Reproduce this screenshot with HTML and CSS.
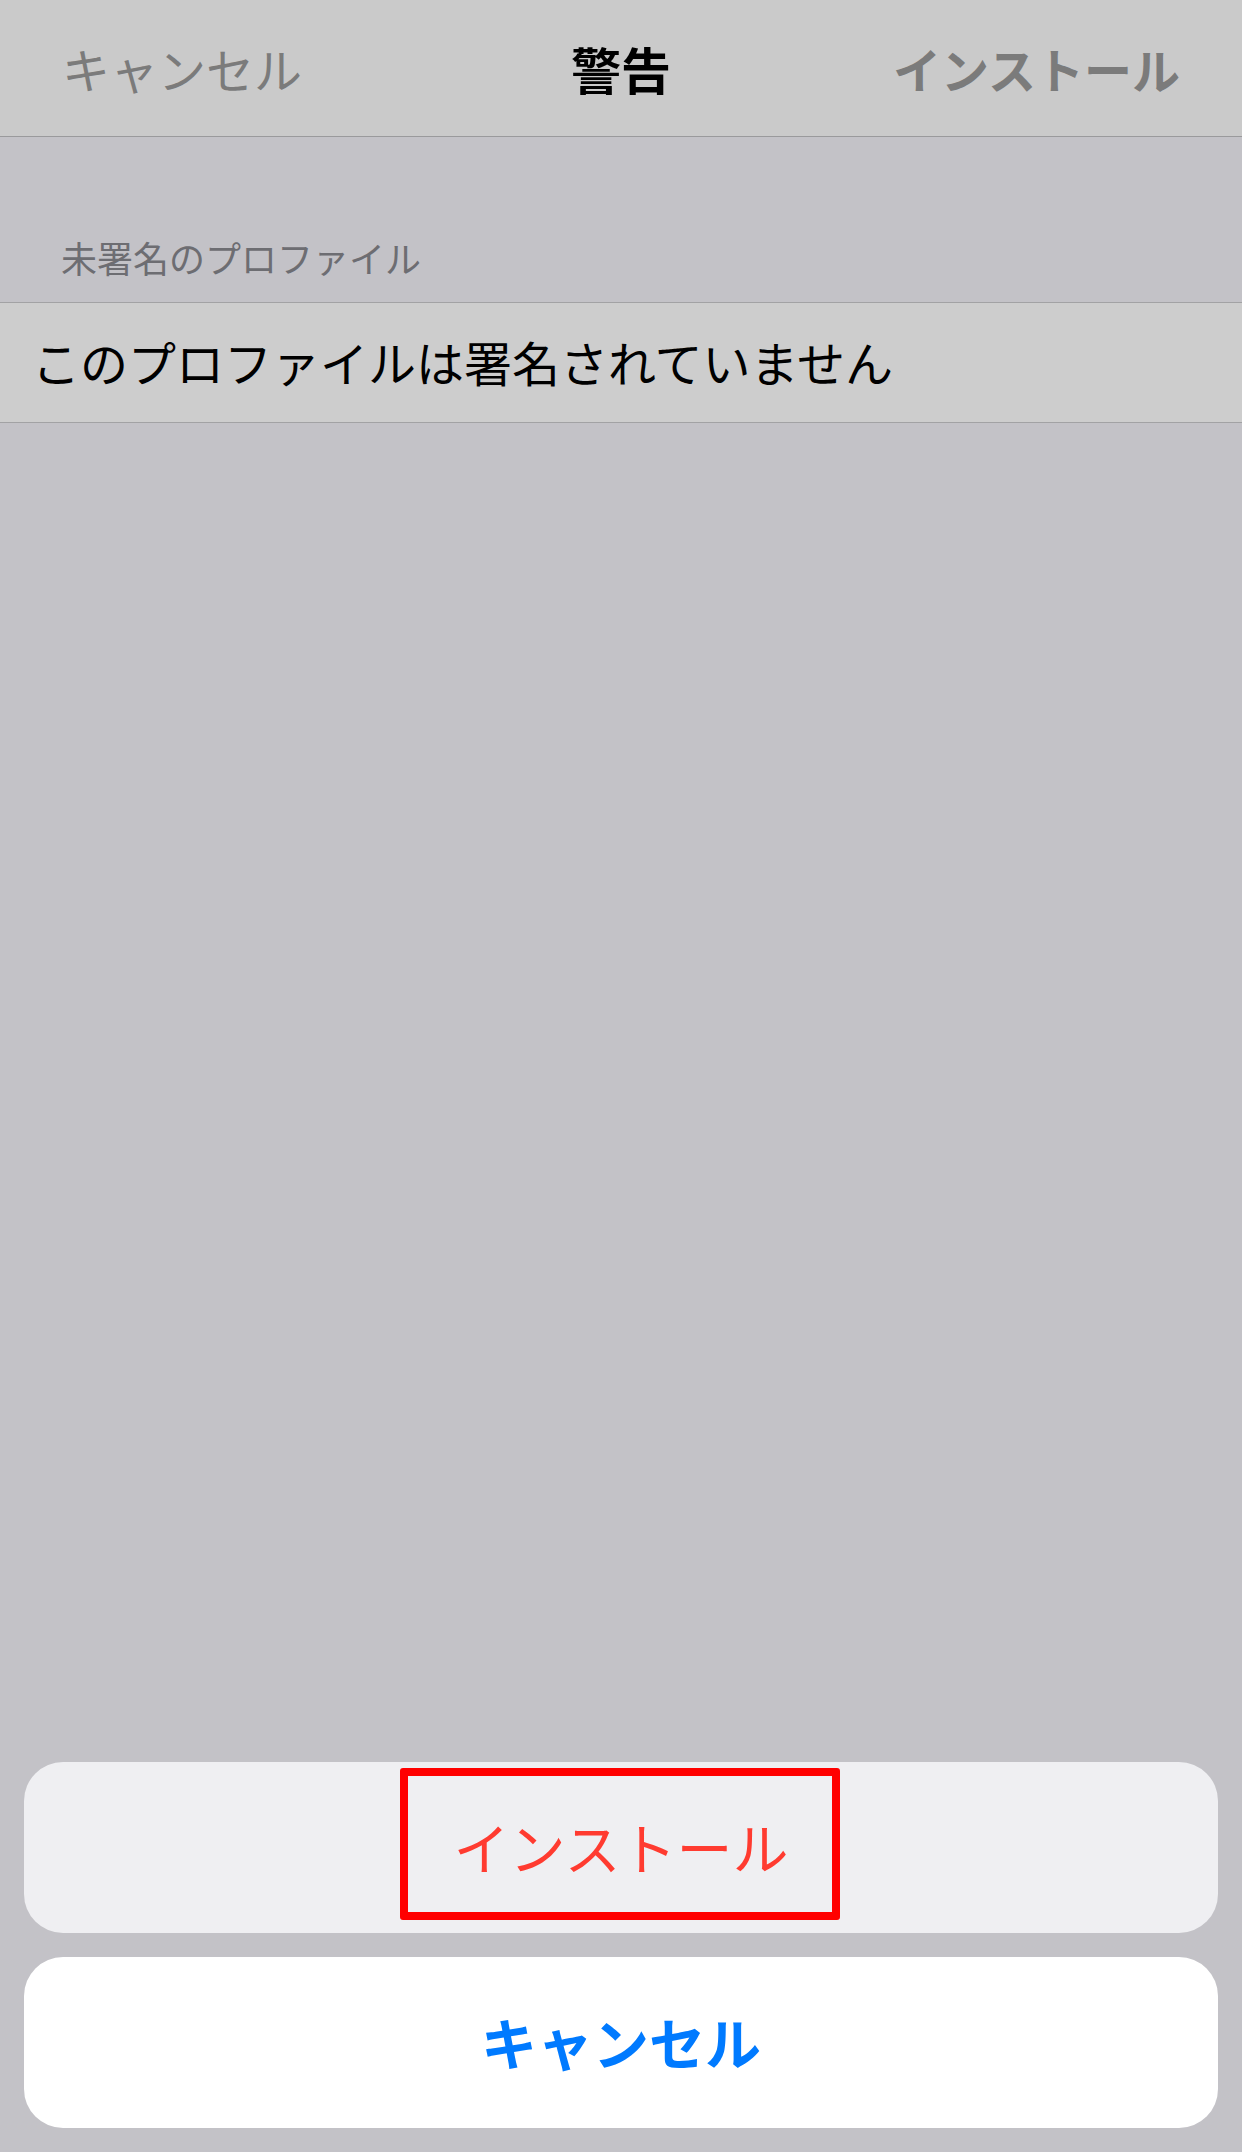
FILE: index.html
```html
<!DOCTYPE html>
<html lang="ja">
<head>
<meta charset="utf-8">
<title>警告</title>
<link rel="stylesheet" href="styles.css">
</head>
<body>
<div class="screen">
  <header class="navbar">
    <span class="nav-left">キャンセル</span>
    <span class="nav-title">警告</span>
    <span class="nav-right">インストール</span>
  </header>
  <div class="section-header">未署名のプロファイル</div>
  <div class="row">このプロファイルは署名されていません</div>
  <div class="spacer"></div>
  <div class="sheet">
    <div class="sheet-btn install">
      <span>インストール</span>
      <div class="highlight"></div>
    </div>
    <div class="sheet-btn cancel">キャンセル</div>
  </div>
</div>
</body>
</html>
```

FILE: styles.css
```css
html, body {
  margin: 0;
  padding: 0;
}
body {
  width: 1242px;
  height: 2152px;
  background: #c3c2c7;
  font-family: "Noto Sans CJK JP", "Noto Sans", sans-serif;
  overflow: hidden;
}
.screen {
  display: flex;
  flex-direction: column;
  height: 2152px;
}
.navbar {
  height: 136px;
  background: #cacaca;
  border-bottom: 1px solid #9a9a9c;
  display: grid;
  grid-template-columns: 1fr auto 1fr;
  align-items: center;
  padding: 0 62px 0 62px;
  font-size: 48px;
  line-height: 1;
}
.nav-left {
  justify-self: start;
  color: #7b7b7b;
  font-weight: 400;
}
.nav-title {
  justify-self: center;
  color: #000;
  font-weight: 700;
  font-size: 50px;
}
.nav-right {
  justify-self: end;
  color: #7b7b7b;
  font-weight: 700;
}
.section-header {
  height: 165px;
  box-sizing: border-box;
  display: flex;
  align-items: flex-end;
  padding: 0 0 27px 61px;
  font-size: 36px;
  line-height: 36px;
  color: #6d6d72;
}
.row {
  height: 121px;
  box-sizing: border-box;
  background: #cdcdcd;
  border-top: 1px solid #a2a2a4;
  border-bottom: 1px solid #a2a2a4;
  display: flex;
  align-items: center;
  padding: 0 0 4px 32px;
  font-size: 48px;
  line-height: 1;
  color: #000;
}
.spacer {
  flex: 1;
}
.sheet {
  display: flex;
  flex-direction: column;
  gap: 24px;
  padding: 0 24px 24px 24px;
}
.sheet-btn {
  position: relative;
  height: 171px;
  border-radius: 39px;
  display: flex;
  align-items: center;
  justify-content: center;
  font-size: 56px;
  line-height: 1;
}
.sheet-btn > span {
  padding-bottom: 4px;
}
.install {
  background: #efeff2;
  color: #ff3b30;
  font-weight: 400;
}
.cancel {
  background: #ffffff;
  color: #007aff;
  font-weight: 700;
  padding-bottom: 3px;
  box-sizing: border-box;
}
.highlight {
  position: absolute;
  left: 376px;
  top: 6px;
  width: 440px;
  height: 152px;
  box-sizing: border-box;
  border: 8px solid #ff0000;
  border-radius: 3px;
}
```
